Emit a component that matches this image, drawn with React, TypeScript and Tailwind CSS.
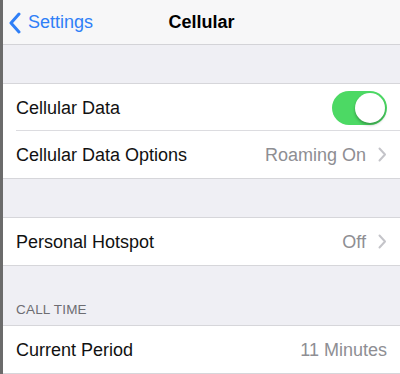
import React from 'react';

const Chevron = () => (
  <svg width="9" height="15" viewBox="0 0 9 15" className="ml-[12px]">
    <path d="M1.5 1.5 L7 7.5 L1.5 13.5" fill="none" stroke="#c4c4c9" strokeWidth="2" strokeLinecap="round" strokeLinejoin="round" />
  </svg>
);

const Row: React.FC<{ label: string; value?: string; chevron?: boolean; last?: boolean; children?: React.ReactNode }> = ({ label, value, chevron, last, children }) => (
  <div className="relative flex items-center h-[47px] pl-[13px] pr-[13px] bg-white">
    <span className="flex-1 text-[18px] text-[#111] pt-[1px]">{label}</span>
    {value && <span className="text-[18px] text-[#8e8e93] pt-[1px]">{value}</span>}
    {chevron && <Chevron />}
    {children}
    {!last && <div className="absolute left-[13px] right-0 bottom-0 h-px bg-[#dcdce0]" />}
  </div>
);

const Group: React.FC<{ children: React.ReactNode }> = ({ children }) => (
  <div className="border-y border-[#d6d6da]">{children}</div>
);

export default function App() {
  return (
    <div className="w-[400px] h-[374px] overflow-hidden bg-[#efeff4] border-l-[3px] border-[#6b6b6b] font-['Liberation_Sans',Arial,sans-serif]">
      {/* nav bar */}
      <div className="relative flex items-center h-[45px] bg-[#f7f7f8] border-b border-[#d3d3d7]">
        <div className="flex items-center pl-[5px] pt-[1px] text-[#2f7ff7]">
          <svg width="14" height="22" viewBox="0 0 14 22">
            <path d="M11 2 L3 11 L11 20" fill="none" stroke="#2f7ff7" strokeWidth="3" strokeLinecap="round" strokeLinejoin="round" />
          </svg>
          <span className="ml-[6px] text-[18px]">Settings</span>
        </div>
        <div className="absolute left-0 right-0 pt-[1px] text-center text-[18px] font-bold text-black pointer-events-none">Cellular</div>
      </div>

      <div className="h-[38px]" />
      <Group>
        <Row label="Cellular Data">
          <div className="relative w-[55px] h-[34px] rounded-full bg-[#4cd964]">
            <div className="absolute right-[2px] top-[2px] w-[30px] h-[30px] rounded-full bg-white shadow-[0_2px_3px_rgba(0,0,0,0.3)]" />
          </div>
        </Row>
        <Row label="Cellular Data Options" value="Roaming On" chevron last />
      </Group>

      <div className="h-[38px]" />
      <Group>
        <Row label="Personal Hotspot" value="Off" chevron last />
      </Group>

      <div className="h-[59px] flex items-end pl-[13px] pb-[5px]">
        <span className="text-[13.5px] text-[#6d6d72] tracking-[0.2px]">CALL TIME</span>
      </div>
      <Group>
        <Row label="Current Period" value="11 Minutes" last />
      </Group>
    </div>
  );
}
